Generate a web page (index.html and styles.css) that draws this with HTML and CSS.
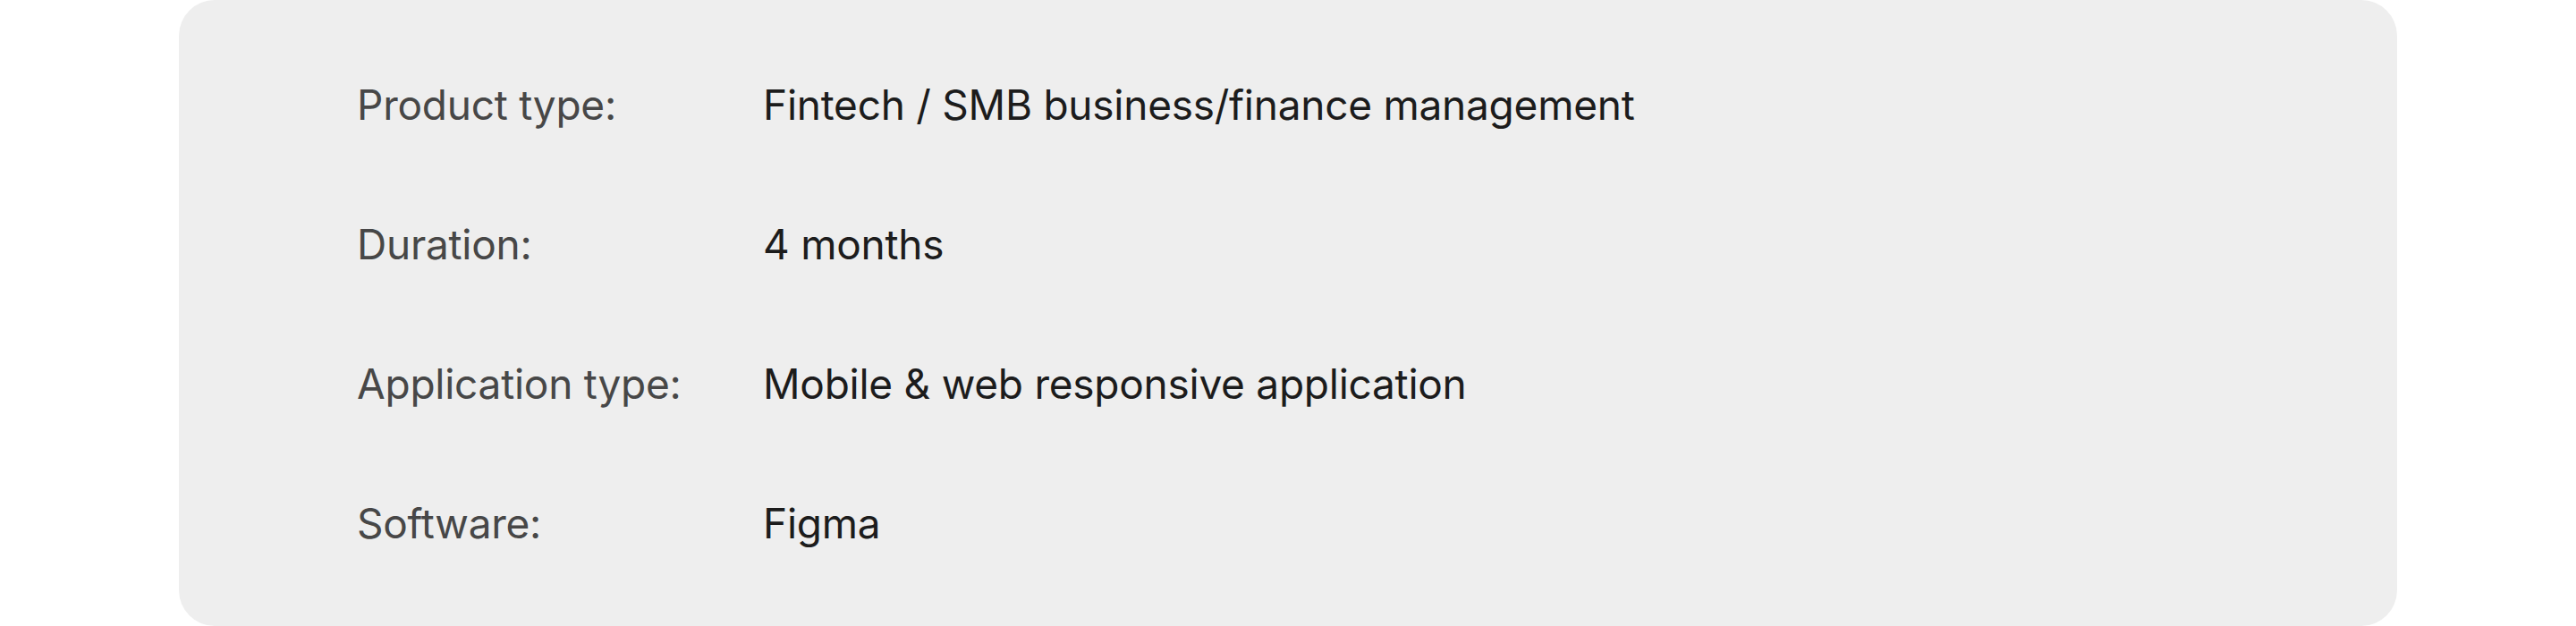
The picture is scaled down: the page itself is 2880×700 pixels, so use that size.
FILE: index.html
```html
<!DOCTYPE html>
<html lang="en">
<head>
<meta charset="utf-8">
<title>Project details</title>
<link rel="stylesheet" href="styles.css">
</head>
<body>
<section class="card">
  <dl class="details">
    <dt class="label">Product type:</dt>
    <dd class="value">Fintech / SMB business/finance management</dd>
    <dt class="label">Duration:</dt>
    <dd class="value">4 months</dd>
    <dt class="label">Application type:</dt>
    <dd class="value">Mobile &amp; web responsive application</dd>
    <dt class="label">Software:</dt>
    <dd class="value">Figma</dd>
  </dl>
</section>
</body>
</html>
```
FILE: styles.css
```css
html, body {
  margin: 0;
  padding: 0;
  background: #ffffff;
}
body {
  font-family: Inter, "Noto Sans", sans-serif;
}
.card {
  margin: 0 200px;
  height: 700px;
  box-sizing: border-box;
  background: #eeeeee;
  border-radius: 40px;
  padding: 89px 0 0 199px;
}
.details {
  margin: 0;
  display: grid;
  grid-template-columns: 454px auto;
  row-gap: 100px;
  font-size: 46px;
  line-height: 56px;
  letter-spacing: -0.25px;
}
.label {
  margin: 0;
  color: #474747;
}
.value {
  margin: 0;
  color: #1c1c1c;
}
```
